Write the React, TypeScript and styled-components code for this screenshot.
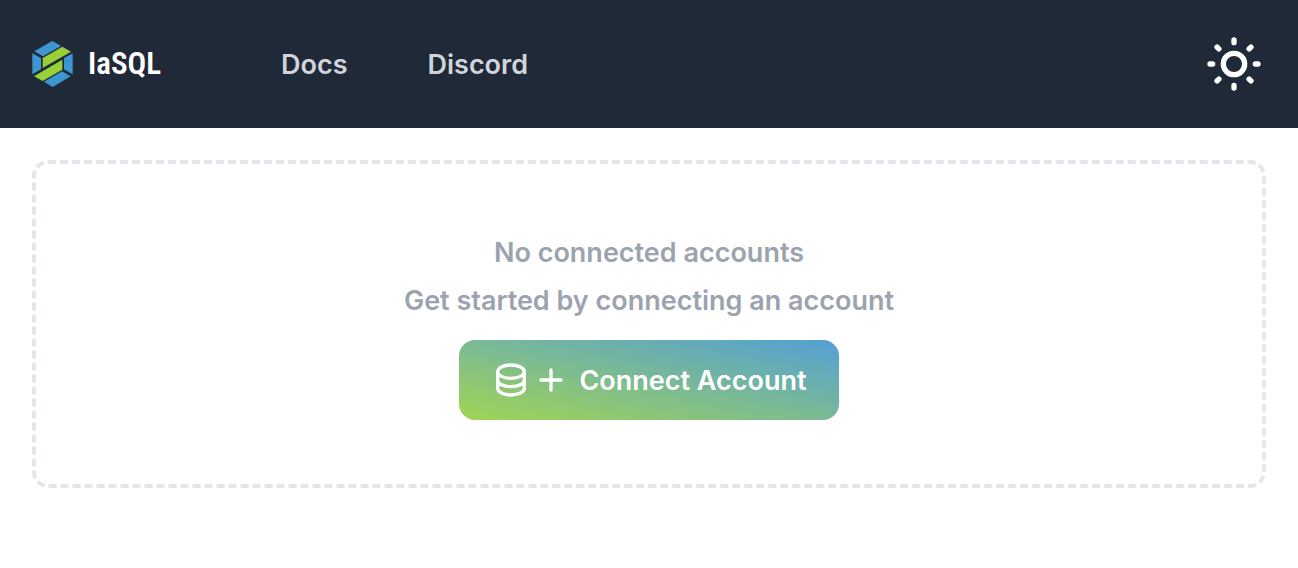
import React from "react";
import styled, { createGlobalStyle } from "styled-components";

const GlobalStyle = createGlobalStyle`
  *, *::before, *::after { box-sizing: border-box; }
  body {
    margin: 0;
    background: #fff;
    font-family: Inter, "Liberation Sans", sans-serif;
    font-size: 27px;
    line-height: 42px;
    font-weight: 600;
  }
`;

const Header = styled.header`
  display: flex;
  align-items: center;
  height: 128px;
  padding: 0 32px;
  background: #1f2937;
`;

const Brand = styled.a`
  display: flex;
  align-items: center;
  gap: 15px;
  color: #fff;
  text-decoration: none;
`;

const BrandName = styled.span`
  font-family: "Roboto Condensed", "Liberation Sans Narrow", Roboto, sans-serif;
  font-size: 31px;
  line-height: 36px;
  font-weight: 600;
`;

const Nav = styled.nav`
  display: flex;
  gap: 80px;
  margin-left: 120px;
  padding-top: 2px;
`;

const NavLink = styled.a`
  color: #d1d5db;
  text-decoration: none;
`;

const ThemeButton = styled.button`
  display: flex;
  margin-left: auto;
  padding: 0;
  border: 0;
  background: none;
  color: #fff;
  cursor: pointer;
`;

const Main = styled.main`
  padding: 32px;
`;

const EmptyState = styled.section`
  display: flex;
  flex-direction: column;
  align-items: center;
  gap: 6px;
  padding: 68px 32px 64px;
  border: 4px dashed #e3e6eb;
  border-radius: 16px;
  color: #9ca3af;
  text-align: center;
`;

const Message = styled.p`
  margin: 0;
`;

const ConnectButton = styled.button`
  display: flex;
  align-items: center;
  height: 80px;
  margin-top: 12px;
  padding: 0 32px;
  border: 0;
  border-radius: 16px;
  background: linear-gradient(to top right, #a1d553, #539fd6);
  color: #fff;
  font: inherit;
  cursor: pointer;
`;

const ButtonLabel = styled.span`
  margin-left: 8px;
  padding-top: 2px;
`;

const StrokeIcon = ({ size, d }: { size: number; d: string }) => (
  <svg
    width={size}
    height={size}
    viewBox="0 0 24 24"
    fill="none"
    stroke="currentColor"
    strokeWidth="2"
    strokeLinecap="round"
    strokeLinejoin="round"
    aria-hidden="true"
  >
    <path d={d} />
  </svg>
);

const SUN =
  "M12 3v1m0 16v1m9-9h-1M4 12H3m15.364 6.364l-.707-.707M6.343 6.343l-.707-.707m12.728 0l-.707.707M6.343 17.657l-.707.707M16 12a4 4 0 11-8 0 4 4 0 018 0z";
const DATABASE =
  "M4 7v10c0 2.21 3.582 4 8 4s8-1.79 8-4V7M4 7c0 2.21 3.582 4 8 4s8-1.79 8-4M4 7c0-2.21 3.582-4 8-4s8 1.79 8 4m0 5c0 2.21-3.582 4-8 4s-8-1.79-8-4";
const PLUS = "M12 6v6m0 0v6m0-6h6m-6 0H6";

const Logo = () => (
  <svg width="41" height="48" viewBox="0 0 123 144" aria-hidden="true">
    <g fill="#3d96d2">
      <path d="M61 3L87 18L33 49L7 34Z" />
      <path d="M1 40L27 54V88L1 103Z" />
      <path d="M122 40V103L96 88V54Z" />
      <path d="M90 94L116 109L62 141L36 125Z" />
    </g>
    <g fill="#98d038">
      <path d="M91 20L117 35L58 69L32 84V54Z" />
      <path d="M91 59V89L32 123L6 109L65 74Z" />
    </g>
  </svg>
);

export default function App() {
  return (
    <>
      <GlobalStyle />
      <Header>
        <Brand href="#">
          <Logo />
          <BrandName>IaSQL</BrandName>
        </Brand>
        <Nav>
          <NavLink href="#docs">Docs</NavLink>
          <NavLink href="#discord">Discord</NavLink>
        </Nav>
        <ThemeButton type="button" aria-label="Toggle theme">
          <StrokeIcon size={64} d={SUN} />
        </ThemeButton>
      </Header>
      <Main>
        <EmptyState>
          <Message>No connected accounts</Message>
          <Message>Get started by connecting an account</Message>
          <ConnectButton type="button">
            <StrokeIcon size={40} d={DATABASE} />
            <StrokeIcon size={40} d={PLUS} />
            <ButtonLabel>Connect Account</ButtonLabel>
          </ConnectButton>
        </EmptyState>
      </Main>
    </>
  );
}
